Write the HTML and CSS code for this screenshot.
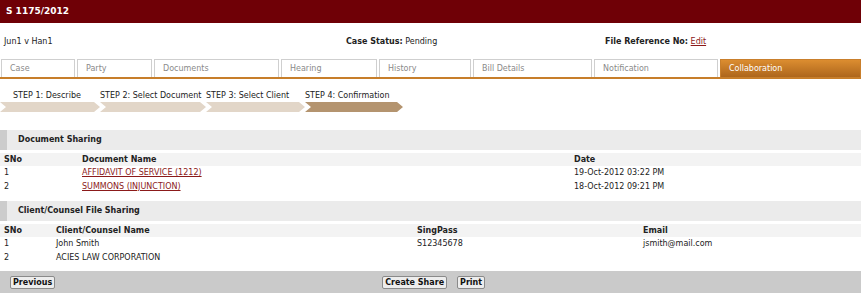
FILE: index.html
```html
<!DOCTYPE html>
<html>
<head>
<meta charset="utf-8">
<link rel="stylesheet" href="styles.css">
</head>
<body>
<div class="titlebar">S 1175/2012</div>
<div class="info">
  <div class="info-parties">Jun1 v Han1</div>
  <div class="info-status"><b>Case Status:</b> Pending</div>
  <div class="info-ref"><b>File Reference No:</b> <a href="#">Edit</a></div>
</div>
<div class="tabs">
  <div class="tab t-case">Case</div>
  <div class="tab t-party">Party</div>
  <div class="tab t-docs">Documents</div>
  <div class="tab t-hearing">Hearing</div>
  <div class="tab t-history">History</div>
  <div class="tab t-bill">Bill Details</div>
  <div class="tab t-notif">Notification</div>
  <div class="tab t-collab active">Collaboration</div>
</div>
<div class="steps">
  <div class="step s1"><span class="step-label">STEP 1: Describe</span><span class="chev"></span></div>
  <div class="step s2"><span class="step-label">STEP 2: Select Document</span><span class="chev"></span></div>
  <div class="step s3"><span class="step-label">STEP 3: Select Client</span><span class="chev"></span></div>
  <div class="step s4 current"><span class="step-label">STEP 4: Confirmation</span><span class="chev"></span></div>
</div>
<div class="section-head first">Document Sharing</div>
<table class="grid docs">
  <thead><tr><th class="c-sno">SNo</th><th class="c-name">Document Name</th><th>Date</th></tr></thead>
  <tbody>
    <tr><td>1</td><td><a href="#">AFFIDAVIT OF SERVICE (1212)</a></td><td>19-Oct-2012 03:22 PM</td></tr>
    <tr><td>2</td><td><a href="#">SUMMONS (INJUNCTION)</a></td><td>18-Oct-2012 09:21 PM</td></tr>
  </tbody>
</table>
<div class="section-head">Client/Counsel File Sharing</div>
<table class="grid clients">
  <thead><tr><th class="c-sno2">SNo</th><th class="c-cname">Client/Counsel Name</th><th class="c-sing">SingPass</th><th>Email</th></tr></thead>
  <tbody>
    <tr><td>1</td><td>John Smith</td><td>S12345678</td><td>jsmith@mail.com</td></tr>
    <tr><td>2</td><td>ACIES LAW CORPORATION</td><td></td><td></td></tr>
  </tbody>
</table>
<div class="footer">
  <button class="btn">Previous</button>
  <div class="footer-mid">
    <button class="btn">Create Share</button>
    <button class="btn">Print</button>
  </div>
</div>
</body>
</html>
```
FILE: styles.css
```css
html, body { margin: 0; padding: 0; background: #fff; }
body { font-family: "DejaVu Sans", Verdana, sans-serif; font-size: 8px; color: #222; width: 861px; height: 293px; overflow: hidden; }
a { color: #8b1a1a; }

.titlebar { height: 23px; line-height: 23px; background: #6f0006; color: #fff; font-weight: bold; font-size: 9px; padding-left: 6px; box-sizing: border-box; }

.info { height: 36px; display: grid; grid-template-columns: 342px 259px 1fr; align-items: center; padding-left: 4px; }

.tabs { display: flex; height: 18px; border-bottom: 2px solid #c77e2a; padding-left: 1px; gap: 2px; }
.tab { box-sizing: border-box; height: 18px; border: 1px solid #cfcfcf; border-bottom: none; color: #8a8a8a; padding-left: 8px; line-height: 17px; background: #fff; }
.t-case { width: 74px; }
.t-party { width: 75px; }
.t-docs { width: 125px; }
.t-hearing { width: 96px; }
.t-history { width: 92px; }
.t-bill { width: 119px; }
.t-notif { width: 124px; }
.t-collab { flex: 1; }
.tab.active { background: linear-gradient(#dc8d30, #ad661c); color: #fff; border-color: #c97f2c; }

.steps { display: flex; padding-top: 11px; height: 36px; box-sizing: border-box; }
.step { display: flex; flex-direction: column; }
.step-label { padding-left: 13px; height: 12px; line-height: 12px; color: #222; white-space: nowrap; }
.chev { display: block; height: 10px; background: #e2d6c8; clip-path: polygon(0 0, calc(100% - 6px) 0, 100% 50%, calc(100% - 6px) 100%, 0 100%, 6px 50%); }
.s1 { width: 100px; }
.s2 { width: 106px; }
.s3 { width: 99px; }
.s4 { width: 98px; }
.s2 .step-label, .s3 .step-label, .s4 .step-label { padding-left: 0; }
.step.current .chev { background: #b4946f; }

.section-head { margin-top: 7px; height: 20px; line-height: 20px; background: #ebebeb; border-left: 7px solid #cccccc; padding-left: 11px; font-weight: bold; }
.section-head.first { margin-top: 15px; }

.grid { width: 100%; border-collapse: collapse; }
.grid th { text-align: left; font-weight: bold; background: #f3f3f3; height: 13px; padding: 0 0 0 4px; line-height: 13px; }
.grid td { padding: 0 0 0 4px; height: 14px; line-height: 14px; }
.docs { margin-top: 3px; }
.docs .c-sno { width: 74px; }
.docs .c-name { width: 488px; }
.clients { margin-top: 3px; }
.clients .c-sno2 { width: 48px; }
.clients .c-cname { width: 357px; }
.clients .c-sing { width: 222px; }

.footer { margin-top: 6px; background: #cacaca; height: 23px; display: flex; align-items: center; padding-left: 10px; }
.footer-mid { margin-left: 327px; display: flex; gap: 10px; }
.btn { font-family: inherit; font-size: 8px; font-weight: bold; color: #111; background: #ededed; border: 1px solid #8a8a8a; border-radius: 2px; padding: 0 2px; height: 13px; line-height: 11px; }
```
